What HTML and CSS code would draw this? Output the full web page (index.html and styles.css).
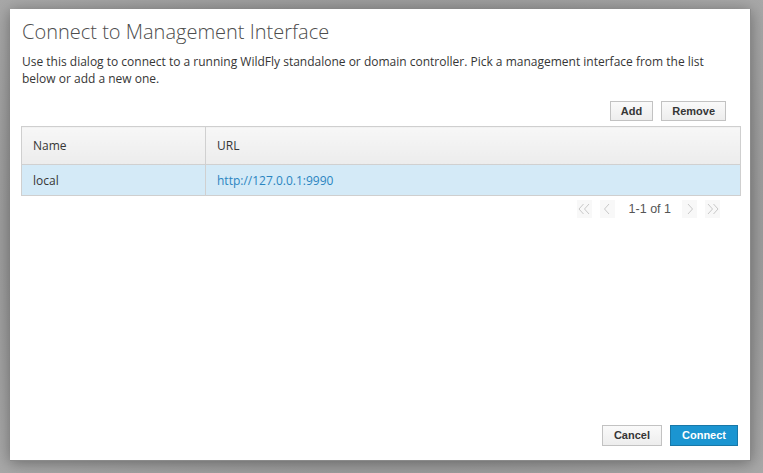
FILE: index.html
```html
<!DOCTYPE html>
<html>
<head>
<meta charset="utf-8">
<link rel="stylesheet" href="styles.css">
</head>
<body>
<div class="dialog">
  <h1 class="title">Connect to Management Interface</h1>
  <p class="desc">Use this dialog to connect to a running WildFly standalone or domain controller. Pick a management interface from the list below or add a new one.</p>
  <div class="toolbar">
    <button class="btn">Add</button>
    <button class="btn">Remove</button>
  </div>
  <table class="grid">
    <thead>
      <tr><th class="c1">Name</th><th>URL</th></tr>
    </thead>
    <tbody>
      <tr class="sel"><td class="c1">local</td><td class="url">http://127.0.0.1:9990</td></tr>
    </tbody>
  </table>
  <div class="pager">
    <span class="pi">
      <svg width="14" height="12" viewBox="0 0 14 12"><path d="M6.5 1 L2 6 L6.5 11 M12 1 L7.5 6 L12 11" fill="none" stroke="#c8c8c8" stroke-width="1"/></svg>
    </span>
    <span class="pi">
      <svg width="10" height="12" viewBox="0 0 10 12"><path d="M7 1 L2.5 6 L7 11" fill="none" stroke="#c8c8c8" stroke-width="1"/></svg>
    </span>
    <span class="count">1-1 of 1</span>
    <span class="pi">
      <svg width="10" height="12" viewBox="0 0 10 12"><path d="M3 1 L7.5 6 L3 11" fill="none" stroke="#c8c8c8" stroke-width="1"/></svg>
    </span>
    <span class="pi">
      <svg width="14" height="12" viewBox="0 0 14 12"><path d="M2 1 L6.5 6 L2 11 M7.5 1 L12 6 L7.5 11" fill="none" stroke="#c8c8c8" stroke-width="1"/></svg>
    </span>
  </div>
  <div class="spacer"></div>
  <div class="footer">
    <button class="btn btn-lg">Cancel</button>
    <button class="btn btn-lg primary">Connect</button>
  </div>
</div>
</body>
</html>
```
FILE: styles.css
```css
html, body {
  margin: 0;
  padding: 0;
}
body {
  width: 763px;
  height: 473px;
  background: radial-gradient(ellipse at 50% 50%, #8e8e8e 0%, #9c9c9c 70%, #a8a8a8 100%);
  padding: 9px 0 0 10px;
  box-sizing: border-box;
  overflow: hidden;
}
.dialog {
  width: 741px;
  height: 452px;
  background: #fff;
  border-right: 1px solid #8a8a8a;
  border-bottom: 1px solid #8a8a8a;
  box-sizing: border-box;
  box-shadow: 0 2px 14px rgba(0, 0, 0, 0.35);
  padding: 0 10px 14px 11px;
  display: flex;
  flex-direction: column;
  font-family: "Open Sans", "DejaVu Sans", sans-serif;
  color: #363636;
}
.title {
  margin: 9px 0 0 1px;
  font-size: 20px;
  font-weight: 300;
  line-height: 28px;
  color: #4d4d4d;
}
.desc {
  margin: 7px 0 0 1px;
  font-size: 12px;
  line-height: 17px;
  color: #363636;
}
.toolbar {
  display: flex;
  justify-content: flex-end;
  gap: 8px;
  margin-top: 14px;
  padding-right: 14px;
}
.btn {
  font-family: "Liberation Sans", Arial, sans-serif;
  font-weight: bold;
  font-size: 11px;
  color: #363636;
  background: linear-gradient(#fafafa, #ededed);
  border: 1px solid #c2c2c2;
  height: 20px;
  padding: 0 10px;
  margin: 0;
  line-height: 18px;
}
.grid {
  margin-top: 5px;
  width: 720px;
  border-collapse: collapse;
  font-size: 12px;
  border: 1px solid #cfcfcf;
}
.grid th {
  text-align: left;
  font-weight: normal;
  height: 37px;
  padding: 0 0 0 11px;
  background: linear-gradient(#f7f7f7, #ececec);
  border-bottom: 1px solid #d0d0d0;
  color: #363636;
}
.grid td {
  height: 30px;
  padding: 0 0 0 11px;
  background: #d4eaf7;
  color: #363636;
}
.grid .c1 {
  width: 172px;
  border-right: 1px solid #d0d0d0;
}
.grid td.url {
  color: #2b85c1;
}
.pager {
  display: flex;
  justify-content: flex-end;
  align-items: center;
  margin-top: 4px;
  padding-right: 20px;
  height: 18px;
  gap: 8px;
}
.pi {
  display: flex;
  align-items: center;
  justify-content: center;
  width: 15px;
  height: 18px;
  background: #f8f8f8;
}
.count {
  font-family: "Liberation Sans", Arial, sans-serif;
  font-size: 12.5px;
  color: #555;
  margin: 0 3px 0 6px;
}
.spacer {
  flex: 1;
}
.footer {
  display: flex;
  justify-content: flex-end;
  gap: 8px;
  padding-right: 2px;
}
.btn-lg {
  height: 21px;
  line-height: 19px;
  padding: 0 11px;
}
.primary {
  background: #1b95d1;
  border-color: #1878a8;
  color: #fff;
}
```
